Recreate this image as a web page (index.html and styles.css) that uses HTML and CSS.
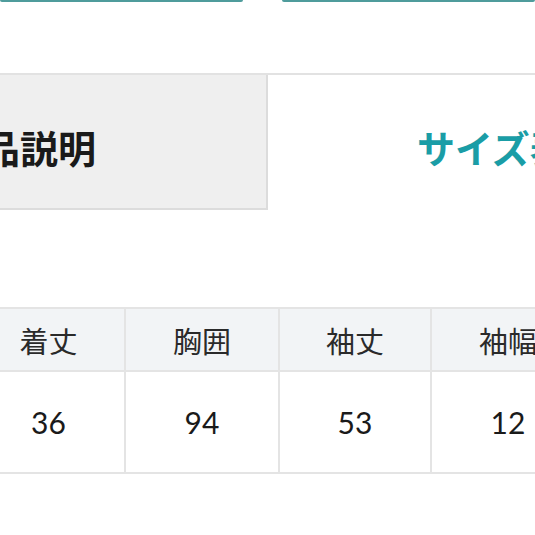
FILE: index.html
```
<!DOCTYPE html>
<html lang="ja">
<head>
<meta charset="utf-8">
<link rel="stylesheet" href="styles.css">
</head>
<body>
<div class="page">
  <div class="top-buttons">
    <div class="btn-edge btn-left"></div>
    <div class="btn-edge btn-right"></div>
  </div>
  <div class="tabs">
    <div class="tab tab-inactive"><span>商品説明</span></div>
    <div class="tab tab-active"><span>サイズ表</span></div>
  </div>
  <div class="size-table">
    <div class="cell head">着丈</div>
    <div class="cell head">胸囲</div>
    <div class="cell head">袖丈</div>
    <div class="cell head">袖幅</div>
    <div class="cell val">36</div>
    <div class="cell val">94</div>
    <div class="cell val">53</div>
    <div class="cell val">12</div>
  </div>
</div>
</body>
</html>
```
FILE: styles.css
```
html, body {
  margin: 0;
  padding: 0;
  background: #ffffff;
}
body {
  width: 535px;
  height: 535px;
  overflow: hidden;
  font-family: "Noto Sans CJK JP", "Noto Sans", sans-serif;
}
.page {
  width: 535px;
  overflow: hidden;
}
.top-buttons {
  display: flex;
  gap: 39px;
  height: 3px;
}
.btn-edge {
  height: 2px;
  background: #4f9c9c;
  border-radius: 0 0 3px 3px;
}
.btn-left {
  width: 243px;
}
.btn-right {
  flex: 1;
}
.tabs {
  display: flex;
  margin-top: 70px;
  margin-left: -198px;
  width: 1000px;
  border-top: 2px solid #e2e2e2;
}
.tab {
  width: 466px;
  height: 133px;
  display: flex;
  align-items: center;
  padding-top: 10px;
  box-sizing: border-box;
  font-size: 38px;
  font-weight: 700;
  white-space: nowrap;
}
.tab-inactive {
  background: #efefef;
  color: #1a1a1a;
  border-right: 2px solid #dcdcdc;
  border-bottom: 2px solid #dcdcdc;
  height: 135px;
  padding-left: 142px;
}
.tab-active {
  background: #ffffff;
  color: #1a9da6;
  padding-left: 149px;
}
.size-table {
  display: grid;
  grid-template-columns: 151px 152px 150px 152px;
  grid-template-rows: 61px 100px;
  gap: 2px;
  padding: 2px;
  background: #e4e4e4;
  margin-top: 97px;
  margin-left: -29px;
  width: max-content;
}
.cell {
  display: flex;
  align-items: center;
  justify-content: center;
}
.head {
  background: #f2f4f6;
  color: #2a2a2a;
  font-size: 29px;
  font-weight: 400;
}
.val {
  background: #ffffff;
  color: #1a1a1a;
  font-family: "Lato", "Noto Sans", sans-serif;
  font-size: 30px;
}
```
